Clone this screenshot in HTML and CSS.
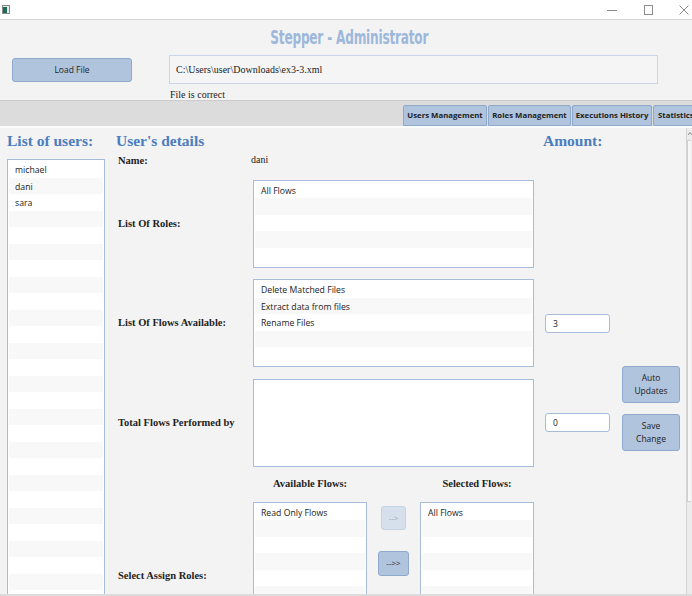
FILE: index.html
```html
<!DOCTYPE html>
<html lang="en">
<head>
<meta charset="utf-8">
<title>Stepper - Administrator</title>
<link rel="stylesheet" href="styles.css">
</head>
<body>
<div class="titlebar">
  <svg class="app-icon" width="8" height="9" viewBox="0 0 8 9"><rect x="0.5" y="0.5" width="7" height="8" fill="#e8e8e8" stroke="#8a8a8a"/><rect x="1" y="2" width="4" height="6" fill="#1f6b5a"/></svg>
  <div class="controls">
    <svg width="10" height="10" viewBox="0 0 10 10"><path d="M0 5.5h10" stroke="#8c8c8c" stroke-width="1"/></svg>
    <svg width="10" height="10" viewBox="0 0 10 10"><rect x="1.5" y="0.5" width="8" height="9" fill="none" stroke="#8c8c8c"/></svg>
    <svg width="10" height="10" viewBox="0 0 10 10"><path d="M0.5 0.5l9 9M9.5 0.5l-9 9" stroke="#8c8c8c" stroke-width="1"/></svg>
  </div>
</div>

<header class="top">
  <h1 class="title"><span>Stepper - Administrator</span></h1>
  <div class="load-row">
    <button class="btn load">Load File</button>
    <div class="path-col">
      <div class="path-field">C:\Users\user\Downloads\ex3-3.xml</div>
      <div class="status">File is correct</div>
    </div>
  </div>
</header>

<nav class="tabbar">
  <div class="tab t1">Users Management</div>
  <div class="tab t2">Roles Management</div>
  <div class="tab t3">Executions History</div>
  <div class="tab t4">Statistics</div>
</nav>

<main class="content">
  <section class="users">
    <h2 class="heading">List of users:</h2>
    <ul class="list users-list">
      <li>michael</li><li>dani</li><li>sara</li>
      <li></li><li></li><li></li><li></li><li></li><li></li><li></li><li></li><li></li><li></li><li></li><li></li><li></li><li></li><li></li><li></li><li></li><li></li><li></li><li></li><li></li><li></li><li></li><li></li>
    </ul>
  </section>

  <section class="details">
    <div class="head-grid">
      <h2 class="heading user-head">User's details</h2>
      <h2 class="heading amount-head">Amount:</h2>
    </div>
    <div class="grid">
      <div class="label">Name:</div>
      <div class="value">dani</div>

      <div class="label mid">List Of Roles:</div>
      <ul class="list box"><li>All Flows</li><li></li><li></li><li></li><li></li></ul>

      <div class="label mid">List Of Flows Available:</div>
      <ul class="list box"><li>Delete Matched Files</li><li>Extract data from files</li><li>Rename Files</li><li></li><li></li></ul>
      <div class="amt"><div class="field">3</div></div>
      <div class="side-btns">
        <button class="btn tall">Auto<br>Updates</button>
        <button class="btn tall">Save<br>Change</button>
      </div>

      <div class="label mid">Total Flows Performed by</div>
      <div class="list box empty"></div>
      <div class="amt"><div class="field">0</div></div>

      <div class="flow-heads">
        <div class="fh">Available Flows:</div>
        <div class="fh-gap"></div>
        <div class="fh">Selected Flows:</div>
      </div>

      <div class="label assign">Select Assign Roles:</div>
      <div class="assign-row">
        <ul class="list small"><li>Read Only Flows</li><li></li><li></li><li></li><li></li><li></li><li></li><li></li></ul>
        <div class="arrows">
          <button class="btn arrow disabled">--&gt;</button>
          <button class="btn arrow wide">--&gt;&gt;</button>
        </div>
        <ul class="list small"><li>All Flows</li><li></li><li></li><li></li><li></li><li></li><li></li><li></li></ul>
      </div>
    </div>
  </section>

  <div class="scrollbar">
    <svg class="sb-arrow" width="6" height="5" viewBox="0 0 6 5"><path d="M1 4l2-2.5L5 4" fill="none" stroke="#8a8a8a"/></svg>
    <div class="sb-thumb"></div>
  </div>
</main>
</body>
</html>
```

FILE: styles.css
```css
* { box-sizing: border-box; margin: 0; padding: 0; }
html, body { width: 692px; height: 596px; overflow: hidden; }
body {
  background: #f3f3f3;
  font-family: "Open Sans", "Noto Sans", sans-serif;
  color: #222;
}

/* window title bar */
.titlebar {
  height: 20px;
  background: #fff;
  border-bottom: 1px solid #d6d6d6;
  display: flex;
  align-items: center;
  justify-content: space-between;
}
.app-icon { margin-left: 2px; }
.controls { display: flex; gap: 26px; margin-right: 3px; align-items: center; }

/* top */
.top { height: 80px; padding-top: 7px; }
.title {
  text-align: center;
  line-height: 20px;
  height: 20px;
  padding-left: 6px;
  font-size: 19px;
}
.title span {
  display: inline-block;
  vertical-align: top;
  line-height: 20px;
  font-family: "DejaVu Sans Condensed", "DejaVu Sans", sans-serif;
  font-stretch: condensed;
  font-weight: bold;
  font-size: 19px;
  color: #9db8da;
  transform: scaleX(0.71);
  letter-spacing: -0.3px;
}
.load-row { display: flex; margin-top: 8px; }
.btn {
  background: #b0c4de;
  border: 1px solid #8ea9cb;
  border-radius: 3px;
  font-family: "Open Sans", "Noto Sans", sans-serif;
  font-size: 8.5px;
  color: #222;
  line-height: 12px;
}
.load { margin: 3px 0 0 12px; width: 120px; height: 24px; }
.path-col { margin-left: 37px; width: 489px; }
.path-field {
  height: 29px;
  border: 1px solid #c9d6e8;
  background: #f5f5f5;
  font-family: "Liberation Serif", serif;
  font-size: 10px;
  line-height: 27px;
  padding-left: 6px;
  color: #222;
}
.status {
  margin-top: 5px;
  padding-left: 1px;
  font-family: "Liberation Serif", serif;
  font-size: 10px;
  line-height: 12px;
}

/* tabs */
.tabbar {
  height: 26px;
  background: #dcdcdc;
  border-top: 1px solid #cbcbcb;
  display: flex;
  gap: 1px;
  padding: 4px 0 0 403px;
  overflow: hidden;
}
.tab {
  flex: none;
  height: 21px;
  background: #b0c4de;
  border: 1px solid #8ea9cb;
  border-radius: 2px 2px 0 0;
  font-size: 7.8px;
  font-weight: bold;
  line-height: 19px;
  text-align: center;
  color: #222;
  white-space: nowrap;
}
.t1 { width: 84px; }
.t2 { width: 83px; }
.t3 { width: 80px; }
.t4 { width: 60px; text-align: left; padding-left: 4px; }

/* content */
.content {
  height: 470px;
  border-top: 2px solid #fbfbfb;
  border-bottom: 2px solid #dcdcdc;
  display: flex;
  overflow: hidden;
}
.heading {
  font-family: "Liberation Serif", serif;
  font-weight: bold;
  font-size: 15.5px;
  line-height: 18px;
  color: #4b7dbf;
  white-space: nowrap;
}
.users { width: 105px; padding: 4px 0 0 7px; flex: none; }
.users-list { margin-top: 9px; height: 460px; }

.list {
  list-style: none;
  background: #fff;
  border: 1px solid #a7bcd8;
  padding: 1px;
  overflow: hidden;
}
.list li {
  height: 16.5px;
  line-height: 16.5px;
  padding-left: 6px;
  padding-top: 1px;
  font-size: 8.7px;
  color: #222;
  white-space: nowrap;
}
.list li:nth-child(even) { background: #f8f8f8; }

.details { margin-left: 11px; padding-top: 4px; flex: none; }
.head-grid {
  display: grid;
  grid-template-columns: 418px 146px;
  height: 18px;
}
.amount-head { margin-left: 9px; }
.grid {
  margin-top: 4px;
  display: grid;
  grid-template-columns: 137px 281px 88px 58px;
  grid-template-rows: 14px 88px 88px 88px 12px 140px;
  row-gap: 11.5px;
}
.label {
  grid-column: 1;
  padding-left: 2px;
  font-family: "Liberation Serif", serif;
  font-weight: bold;
  font-size: 10.5px;
  line-height: 14px;
  color: #1e1e1e;
  white-space: nowrap;
}
.label.mid { align-self: center; }
.value {
  font-family: "Liberation Serif", serif;
  font-size: 10px;
  line-height: 14px;
  margin-left: -2px;
  margin-top: -1px;
}
.box { grid-column: 2; height: 88px; }
.amt { grid-column: 3; align-self: center; padding-left: 11px; }
.field {
  width: 65px;
  height: 19px;
  background: #fff;
  border: 1px solid #a7bcd8;
  border-radius: 3px;
  font-size: 8.5px;
  line-height: 17px;
  padding-left: 7px;
}
.side-btns {
  grid-column: 4;
  grid-row: 3 / span 2;
  display: flex;
  flex-direction: column;
  justify-content: flex-end;
  gap: 11px;
  padding-bottom: 16px;
}
.tall { width: 58px; height: 37px; line-height: 13px; }

.flow-heads {
  grid-column: 2;
  grid-row: 5;
  display: flex;
}
.fh {
  width: 114px;
  text-align: center;
  font-family: "Liberation Serif", serif;
  font-weight: bold;
  font-size: 10.5px;
  line-height: 12px;
  white-space: nowrap;
  color: #1e1e1e;
}
.fh-gap { width: 53px; }
.label.assign { grid-row: 6; margin-top: 67px; }
.assign-row { grid-column: 2; grid-row: 6; display: flex; }
.small { width: 114px; height: 140px; flex: none; }
.arrows {
  width: 53px;
  display: flex;
  flex-direction: column;
  align-items: center;
  padding-top: 4px;
  gap: 21px;
}
.arrow { width: 25px; height: 24px; font-size: 8px; }
.arrow.wide { width: 31px; height: 25px; }
.arrow.disabled { background: #d6e0ec; border-color: #c4d2e4; color: #9aa4b0; }

.scrollbar {
  margin-left: auto;
  width: 6px;
  background: #ececec;
  border-left: 1px solid #d4d4d4;
  padding-top: 3px;
}
.sb-arrow { display: block; }
.sb-thumb {
  margin-top: 4px;
  width: 4px;
  height: 362px;
  background: #f7f7f7;
  border: 1px solid #cfcfcf;
  border-right: none;
}
```
